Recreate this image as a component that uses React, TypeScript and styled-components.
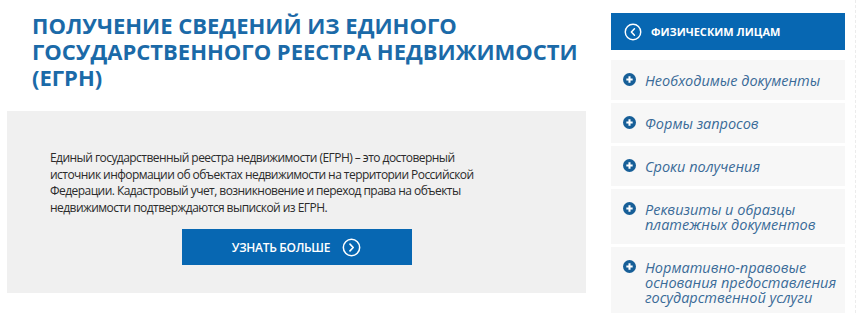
import React from "react";
import styled, { createGlobalStyle } from "styled-components";

const GlobalStyle = createGlobalStyle`
  body {
    margin: 0;
    background: #ffffff;
    font-family: "Open Sans", "Noto Sans", sans-serif;
  }
`;

const sideLinks = [
  "Необходимые документы",
  "Формы запросов",
  "Сроки получения",
  "Реквизиты и образцы платежных документов",
  "Нормативно-правовые основания предоставления государственной услуги",
];

function CircleArrow({ dir, size }: { dir: "left" | "right"; size: number }) {
  return (
    <svg width={size} height={size} viewBox="0 0 20 20" fill="none">
      <circle cx="10" cy="10" r="8.6" stroke="#fff" strokeWidth="1.6" />
      {dir === "right" ? (
        <path d="M8.4 6.4 L11.8 10 L8.4 13.6" stroke="#fff" strokeWidth="1.7" strokeLinecap="round" strokeLinejoin="round" />
      ) : (
        <path d="M11.6 6.4 L8.2 10 L11.6 13.6" stroke="#fff" strokeWidth="1.7" strokeLinecap="round" strokeLinejoin="round" />
      )}
    </svg>
  );
}

function PlusIcon() {
  return (
    <svg width="13" height="13" viewBox="0 0 14 14">
      <circle cx="7" cy="7" r="7" fill="#175f98" />
      <path d="M7 3.6 V10.4 M3.6 7 H10.4" stroke="#fff" strokeWidth="2.2" />
    </svg>
  );
}

export default function App() {
  return (
    <>
      <GlobalStyle />
      <Page>
        <Main>
          <Title>
            Получение сведений из единого государственного реестра недвижимости (ЕГРН)
          </Title>
          <InfoBox>
            <Lead>
              Единый государственный реестра недвижимости (ЕГРН) – это достоверный
              источник информации об объектах недвижимости на территории Российской
              Федерации. Кадастровый учет, возникновение и переход права на объекты
              недвижимости подтверждаются выпиской из ЕГРН.
            </Lead>
            <MoreButton>
              <span>Узнать больше</span>
              <CircleArrow dir="right" size={19} />
            </MoreButton>
          </InfoBox>
        </Main>
        <Aside>
          <AsideHeader>
            <CircleArrow dir="left" size={18} />
            <span>Физическим лицам</span>
          </AsideHeader>
          <LinkList>
            {sideLinks.map((label) => (
              <LinkItem key={label}>
                <IconSlot>
                  <PlusIcon />
                </IconSlot>
                <LinkText>{label}</LinkText>
              </LinkItem>
            ))}
          </LinkList>
        </Aside>
        <Rule />
      </Page>
    </>
  );
}

const Page = styled.div`
  display: flex;
  align-items: flex-start;
  height: 313px;
  overflow: hidden;
  padding-left: 7px;
`;

const Main = styled.div`
  width: 579px;
  display: flex;
  flex-direction: column;
`;

const Title = styled.h1`
  margin: 12px 0 0 25px;
  font-size: 22px;
  line-height: 26px;
  font-weight: 700;
  text-transform: uppercase;
  color: #1b6aa8;
  width: 560px;
`;

const InfoBox = styled.div`
  margin-top: 21px;
  height: 182px;
  box-sizing: border-box;
  background: #f0f0f0;
  padding: 39px 20px 0 43px;
  display: flex;
  flex-direction: column;
`;

const Lead = styled.p`
  margin: 0;
  width: 440px;
  font-size: 12px;
  line-height: 16.6px;
  letter-spacing: -0.55px;
  color: #2b2b2b;
`;

const MoreButton = styled.button`
  align-self: center;
  margin: 13px 0 0 -23px;
  width: 230px;
  height: 36px;
  border: none;
  background: #0767b2;
  color: #fff;
  font-family: "Open Sans", sans-serif;
  font-size: 12px;
  font-weight: 600;
  letter-spacing: -0.3px;
  text-transform: uppercase;
  display: flex;
  align-items: center;
  justify-content: center;
  gap: 12px;
  padding: 0;
`;

const Aside = styled.aside`
  margin-left: 25px;
  margin-top: 13px;
  width: 234px;
  display: flex;
  flex-direction: column;
`;

const AsideHeader = styled.div`
  height: 37px;
  background: #0767b2;
  display: flex;
  align-items: center;
  gap: 9px;
  padding-left: 13px;
  color: #fff;
  font-size: 11px;
  font-weight: 700;
  text-transform: uppercase;
`;

const LinkList = styled.div`
  margin-top: 10px;
  display: flex;
  flex-direction: column;
  gap: 3px;
`;

const LinkItem = styled.div`
  background: #f7f7f7;
  display: flex;
  align-items: flex-start;
  gap: 9px;
  padding: 12.5px 4px 12.5px 12px;
`;

const IconSlot = styled.span`
  flex: none;
  height: 15px;
  display: flex;
  align-items: center;
  margin-top: -1px;
`;

const LinkText = styled.span`
  font-size: 14.5px;
  line-height: 15px;
  font-style: italic;
  color: #3a6b98;
`;

const Rule = styled.div`
  margin-left: 10px;
  width: 0;
  height: 313px;
  border-left: 1px dashed #ececec;
`;
